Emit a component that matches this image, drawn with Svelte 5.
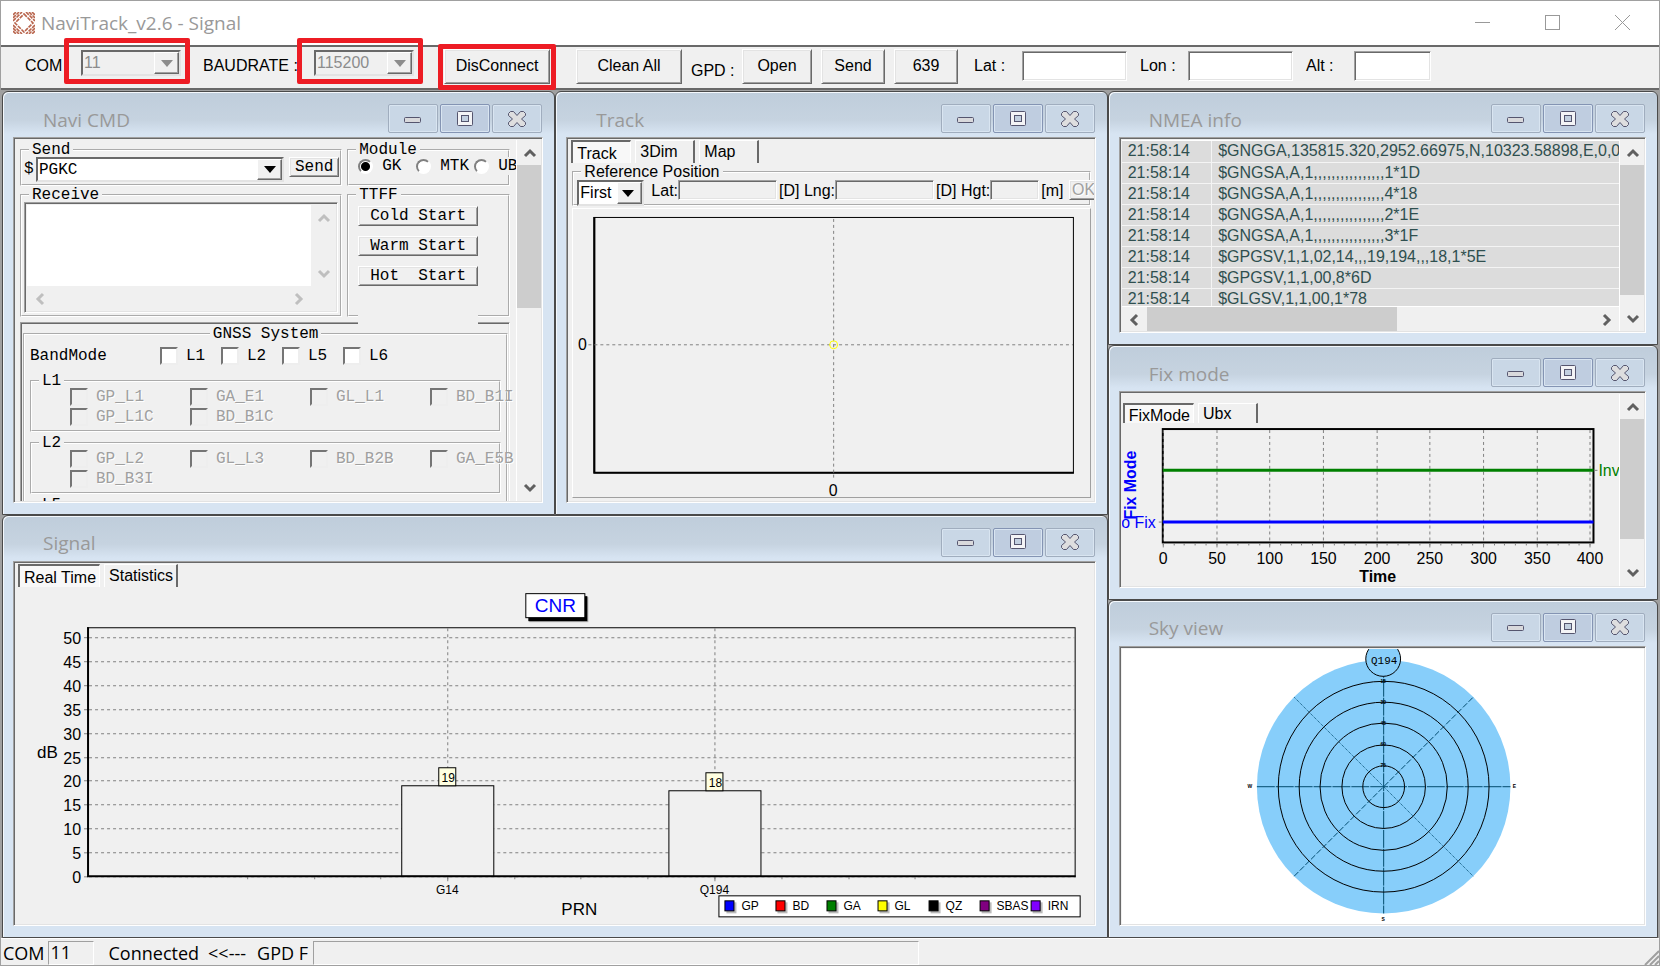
<script lang="ts">
	import type { Snippet } from 'svelte';

	let com = $state('11');
	let baud = $state('115200');
	let command = $state('PGKC');
	let module = $state('GK');
	let refMode = $state('First');
	let lat = $state('');
	let lon = $state('');
	let alt = $state('');
	let received = $state('');
	let trackTab = $state('Track');
	let fixTab = $state('FixMode');
	let signalTab = $state('Real Time');

	const bands = ['L1', 'L2', 'L5', 'L6'];
	const signalGroups = [
		{ name: 'L1', items: ['GP_L1', 'GA_E1', 'GL_L1', 'BD_B1I', 'GP_L1C', 'BD_B1C'] },
		{ name: 'L2', items: ['GP_L2', 'GL_L3', 'BD_B2B', 'GA_E5B', 'BD_B3I'] },
		{ name: 'L5', items: [] }
	];

	const nmea = [
		'$GNGGA,135815.320,2952.66975,N,10323.58898,E,0,0,',
		'$GNGSA,A,1,,,,,,,,,,,,,,,,1*1D',
		'$GNGSA,A,1,,,,,,,,,,,,,,,,4*18',
		'$GNGSA,A,1,,,,,,,,,,,,,,,,2*1E',
		'$GNGSA,A,1,,,,,,,,,,,,,,,,3*1F',
		'$GPGSV,1,1,02,14,,,19,194,,,18,1*5E',
		'$GPGSV,1,1,00,8*6D',
		'$GLGSV,1,1,00,1*78'
	].map((text) => ({ time: '21:58:14', text }));

	const dbTicks = [0, 5, 10, 15, 20, 25, 30, 35, 40, 45, 50];
	const dbY = (v: number) => Math.round(289 - v * 4.78) + 0.5;
	const bars = [
		{ prn: 'G14', x: 431, value: 19 },
		{ prn: 'Q194', x: 698, value: 18 }
	];
	const prnTicks = [231, 298, 364, 431, 498, 564, 631, 698, 765, 832, 898];

	const systems = [
		{ name: 'GP', color: '#0000ff' },
		{ name: 'BD', color: '#ff0000' },
		{ name: 'GA', color: '#008000' },
		{ name: 'GL', color: '#ffff00' },
		{ name: 'QZ', color: '#000000' },
		{ name: 'SBAS', color: '#800080' },
		{ name: 'IRN', color: '#8000ff' }
	];

	const timeTicks = [0, 50, 100, 150, 200, 250, 300, 350, 400];
	const timeX = (t: number) => Math.round(41 + t * 1.073) + 0.5;
	const minorTicks = Array.from({ length: 41 }, (_, i) => i * 10);

	const rings = [
		{ r: 106, label: '15' },
		{ r: 85, label: '30' },
		{ r: 64, label: '45' },
		{ r: 42, label: '60' },
		{ r: 21, label: '75' }
	];
</script>

<svelte:head><title>NaviTrack_v2.6 - Signal</title></svelte:head>

{#snippet win(title: string, area: string, body: Snippet)}
	<section class="win {area}">
		<header class="win-head">
			<h2>{title}</h2>
			<button class="win-btn" aria-label="Minimize {title}">
				<svg width="18" height="18"><rect x="0.5" y="7.5" width="16" height="5" rx="1" fill="#d9d9dc" stroke="#55556e" /></svg>
			</button>
			<button class="win-btn active" aria-label="Maximize {title}">
				<svg width="18" height="18">
					<rect x="1.5" y="1.5" width="15" height="14" rx="1" fill="#f4f4f6" stroke="#55556e" />
					<rect x="5.5" y="5.5" width="7" height="6" fill="#c3d0e0" stroke="#55556e" />
				</svg>
			</button>
			<button class="win-btn" aria-label="Close {title}">
				<svg width="18" height="18">
					<path d="M2.5 1.5h3L9 5.5l3.5-4h3l2 2v2L13.5 9l4 3.5v2l-2 2h-3L9 12.5l-3.5 4h-3l-2-2v-2L4.5 9l-4-3.5v-2z" fill="#dededf" stroke="#55556e" />
				</svg>
			</button>
		</header>
		<div class="client sunken">{@render body()}</div>
	</section>
{/snippet}

{#snippet chevron(dir: string)}
	<svg class="chevron {dir}" width="14" height="14"><path d="M2 10l5-5 5 5" fill="none" stroke="currentColor" stroke-width="3" /></svg>
{/snippet}

{#snippet scrollbar(dir: string, thumb: number)}
	<div class="scroll {dir}" class:idle={thumb === 0}>
		<button aria-label="Scroll back">{@render chevron(dir === 'v' ? 'up' : 'left')}</button>
		<div class="scroll-track">
			<div class="thumb" style="flex-basis: {thumb}%"></div>
		</div>
		<button aria-label="Scroll forward">{@render chevron(dir === 'v' ? 'down' : 'right')}</button>
	</div>
{/snippet}

{#snippet arrow()}
	<span class="arrow"><svg width="12" height="7"><path d="M0 0h12L6 7z" fill="currentColor" /></svg></span>
{/snippet}

{#snippet naviBody()}
	<div class="navi">
		<div class="navi-row">
			<fieldset class="wide send">
				<legend>Send</legend>
				<label for="cmd">$</label>
				<div class="combo grow">
					<select id="cmd" bind:value={command}>
						<option>PGKC</option>
						<option>PMTK</option>
					</select>
					{@render arrow()}
				</div>
				<button class="btn small">Send</button>
			</fieldset>
			<fieldset class="narrow">
				<legend>Module</legend>
				<div class="radios">
					{#each ['GK', 'MTK', 'UB'] as m}
						<label><input type="radio" name="module" value={m} bind:group={module} />{m}</label>
					{/each}
				</div>
			</fieldset>
		</div>
		<div class="navi-row">
			<fieldset class="wide receive">
				<legend>Receive</legend>
				<div class="receive-box sunken">
					<div class="receive-top">
						<textarea aria-label="Receive" bind:value={received}></textarea>
						{@render scrollbar('v', 0)}
					</div>
					{@render scrollbar('h', 0)}
				</div>
			</fieldset>
			<fieldset class="narrow ttff">
				<legend>TTFF</legend>
				<button class="btn small">Cold Start</button>
				<button class="btn small">Warm Start</button>
				<button class="btn small">Hot&nbsp; Start</button>
				<div class="blank"></div>
			</fieldset>
		</div>
		<div class="gnss sunken">
			<fieldset>
				<legend class="center">GNSS System</legend>
				<div class="bands">
					<span>BandMode</span>
					{#each bands as b}
						<label><input type="checkbox" />{b}</label>
					{/each}
				</div>
				{#each signalGroups as g}
					<fieldset class="signals">
						<legend>{g.name}</legend>
						<div class="signal-grid">
							{#each g.items as s}
								<label><input type="checkbox" disabled />{s}</label>
							{/each}
						</div>
					</fieldset>
				{/each}
			</fieldset>
		</div>
	</div>
	{@render scrollbar('v', 46)}
{/snippet}

{#snippet tabs(names: string[], current: string, pick: (n: string) => void)}
	<div class="tabs" role="tablist">
		{#each names as n}
			<button role="tab" class="tab" class:selected={n === current} aria-selected={n === current} onclick={() => pick(n)}>{n}</button>
		{/each}
	</div>
{/snippet}

{#snippet trackBody()}
	<div class="column track-column">
		{@render tabs(['Track', '3Dim', 'Map'], trackTab, (n) => (trackTab = n))}
		<fieldset class="refpos">
			<legend>Reference Position</legend>
			<div class="ref-row">
				<div class="combo ref-mode">
					<select aria-label="Reference mode" bind:value={refMode}>
						<option>First</option>
						<option>Mean</option>
					</select>
					{@render arrow()}
				</div>
				<label for="rlat">Lat:</label><input id="rlat" class="sunken" disabled />
				<label for="rlng">[D] Lng:</label><input id="rlng" class="sunken" disabled />
				<label for="rhgt">[D] Hgt:</label><input id="rhgt" class="sunken hgt" disabled />
				<span>[m]</span>
				<button class="btn ok" disabled>OK</button>
			</div>
		</fieldset>
		<div class="track-panel">
			<svg viewBox="0 0 516 289" role="img" aria-label="Track plot">
				<rect x="19.5" y="8.5" width="482" height="257" fill="none" stroke="#000" />
				<path d="M20 8v258M19 265h483" stroke="#000" stroke-width="2" />
				<path class="gridline" d="M260.5 10V265M14 136.5H501M260.5 267v4" />
				<circle cx="260.5" cy="136.5" r="4" fill="none" stroke="#ffff00" />
				<text x="8" y="142" text-anchor="middle">0</text>
				<text x="260" y="288" text-anchor="middle">0</text>
			</svg>
		</div>
	</div>
{/snippet}

{#snippet nmeaBody()}
	<div class="column">
		<div class="table-wrap">
			<table>
				<tbody>
					{#each nmea as row}
						<tr><td class="time">{row.time}</td><td>{row.text}</td></tr>
					{/each}
				</tbody>
			</table>
		</div>
		{@render scrollbar('h', 56)}
	</div>
	{@render scrollbar('v', 92)}
{/snippet}

{#snippet fixBody()}
	<div class="column fix-column">
		{@render tabs(['FixMode', 'Ubx'], fixTab, (n) => (fixTab = n))}
		<svg viewBox="0 0 500 163" role="img" aria-label="Fix mode over time">
			<rect x="41" y="6" width="433" height="114" fill="none" stroke="#000" stroke-width="2" />
			{#each timeTicks as t}
				<path class="gridline" d="M{timeX(t)} 7V119" />
				<path class="tick" d="M{timeX(t)} 121v4" />
				<text x={timeX(t)} y="142" text-anchor="middle">{t}</text>
			{/each}
			{#each minorTicks as t}
				<path class="tick" d="M{timeX(t)} 121v2" />
			{/each}
			<path d="M41 47.5H474" stroke="#008000" stroke-width="3" />
			<path d="M41 99.5H474" stroke="#0000ff" stroke-width="3" />
			<path class="tick" d="M475 47.5h3M37 99.5h3" />
			<text x="479" y="53" fill="#008000">Invalid</text>
			<text x="34" y="105" text-anchor="end" fill="#0000ff">No Fix</text>
			<text class="bold" transform="translate(14 97) rotate(-90)" fill="#0000ff">Fix Mode</text>
			<text class="bold" x="257" y="160" text-anchor="middle">Time</text>
		</svg>
	</div>
	{@render scrollbar('v', 85)}
{/snippet}

{#snippet signalBody()}
	<div class="column signal-column">
		{@render tabs(['Real Time', 'Statistics'], signalTab, (n) => (signalTab = n))}
		<svg viewBox="0 0 1077 337" role="img" aria-label="CNR per satellite">
			<rect x="513" y="10" width="59" height="25" fill="#777" opacity="0.5" />
			<rect x="512" y="9" width="59" height="25" fill="#000" />
			<rect x="509.5" y="6.5" width="59" height="24" fill="#fff" stroke="#000" />
			<text class="heading" x="539" y="25" text-anchor="middle" fill="#0000ff">CNR</text>

			<path d="M71 40.5H1058.5V290" fill="none" stroke="#000" />
			{#each dbTicks as v}
				<path class="gridline" d="M73 {dbY(v)}H1058" />
				<path class="tick" d="M68 {dbY(v)}h4" />
				<text x="65" y={dbY(v) + 6} text-anchor="end">{v}</text>
			{/each}
			{#each bars as b}
				<path class="gridline" d="M{b.x + 0.5} 41V289" />
				<rect x={b.x - 45.5} y={dbY(b.value)} width="92" height={289 - dbY(b.value)} fill="#f0f0f0" stroke="#000" />
				<rect x={b.x - 8.5} y={dbY(b.value) - 18} width="17" height="18" fill="#ffffe1" stroke="#000" />
				<text class="tiny" x={b.x + 1} y={dbY(b.value) - 4} text-anchor="middle">{b.value}</text>
				<path class="tick" d="M{b.x + 0.5} 290v4" />
				<text class="tiny" x={b.x} y="307" text-anchor="middle">{b.prn}</text>
			{/each}
			{#each prnTicks as x}
				<path class="tick" d="M{x + 0.5} 290v2" />
			{/each}
			<path d="M72 40V290M71 289H1059" stroke="#000" stroke-width="2" />
			<text class="axis" x="21" y="171">dB</text>
			<text class="axis" x="545" y="328">PRN</text>

			<rect x="702.5" y="308.5" width="361" height="21" fill="#fff" stroke="#000" />
			{#each systems as s, i}
				<rect x={710 + i * 51} y="315" width="10" height="11" fill="#bbb" />
				<rect x={708.5 + i * 51} y="313.5" width="9" height="10" fill={s.color} stroke="#000" />
				<text class="tiny" x={725 + i * 51} y="323">{s.name}</text>
			{/each}
		</svg>
	</div>
{/snippet}

{#snippet skyBody()}
	<div class="column sky">
		<svg viewBox="0 0 524 277" role="img" aria-label="Sky view">
			<circle cx="262.5" cy="138.5" r="127.5" fill="#87cefa" />
			<path class="spoke" d="M135 138.5H390M262.5 11V266" />
			<path class="spoke dashed" d="M172.5 228.5L352.5 48.5" />
			<path class="spoke thin" d="M172.5 48.5L352.5 228.5" />
			{#each rings as ring}
				<circle cx="262.5" cy="138.5" r={ring.r} fill="none" stroke="#000" />
				<text class="mark" x="262" y={140 - ring.r} text-anchor="middle">{ring.label}</text>
			{/each}
			<circle cx="262" cy="10" r="17.5" fill="#87cefa" stroke="#000" />
			<text class="sat" x="263" y="15" text-anchor="middle">Q194</text>
			<text class="mark" x="128" y="140" text-anchor="middle">W</text>
			<text class="mark" x="394" y="140" text-anchor="middle">E</text>
			<text class="mark" x="262" y="274" text-anchor="middle">S</text>
		</svg>
	</div>
{/snippet}

<div class="app">
	<header class="titlebar">
		<svg class="logo" width="22" height="22" viewBox="0 0 22 22">
			<g fill="none" stroke="#b8644c" stroke-width="1.6" stroke-dasharray="4 1">
				<path d="M11 2L20 11 11 20 2 11z" />
				<path d="M0 9L9 0M0 6L6 0M0 3L3 0M13 0l9 9M16 0l6 6M19 0l3 3M0 13l9 9M0 16l6 6M0 19l3 3M22 13l-9 9M22 16l-6 6M22 19l-3 3" />
			</g>
		</svg>
		<h1>NaviTrack_v2.6 - Signal</h1>
		<div class="caption">
			<button aria-label="Minimize"><svg width="16" height="16"><path d="M0 7.5h15" /></svg></button>
			<button aria-label="Maximize"><svg width="16" height="16"><rect x="0.5" y="0.5" width="14" height="14" /></svg></button>
			<button aria-label="Close"><svg width="16" height="16"><path d="M0 0l15 15M15 0L0 15" /></svg></button>
		</div>
	</header>

	<div class="toolbar">
		<label class="l-com" for="com">COM</label>
		<div class="marked">
			<div class="combo off">
				<select id="com" bind:value={com} disabled><option>11</option></select>
				{@render arrow()}
			</div>
		</div>
		<label class="l-baud" for="baud">BAUDRATE :</label>
		<div class="marked">
			<div class="combo off">
				<select id="baud" bind:value={baud} disabled><option>115200</option></select>
				{@render arrow()}
			</div>
		</div>
		<div class="marked tight">
			<button class="btn wide-btn">DisConnect</button>
		</div>
		<button class="btn wide-btn clean">Clean All</button>
		<span class="gpd">GPD :</span>
		<div class="gpd-buttons">
			<button class="btn">Open</button>
			<button class="btn">Send</button>
			<button class="btn">639</button>
		</div>
		<label class="l-pos" for="lat">Lat :</label><input id="lat" class="sunken" bind:value={lat} />
		<label class="l-pos" for="lon">Lon :</label><input id="lon" class="sunken" bind:value={lon} />
		<label class="l-pos" for="alt">Alt :</label><input id="alt" class="sunken alt" bind:value={alt} />
	</div>

	<main class="mdi">
		{@render win('Navi CMD', 'a-navi', naviBody)}
		{@render win('Track', 'a-track', trackBody)}
		{@render win('NMEA info', 'a-nmea', nmeaBody)}
		{@render win('Fix mode', 'a-fix', fixBody)}
		{@render win('Signal', 'a-signal', signalBody)}
		{@render win('Sky view', 'a-sky', skyBody)}
	</main>

	<footer class="status">
		<span>COM</span>
		<span class="cell port">11</span>
		<span class="state">Connected</span>
		<span class="dir">&lt;&lt;---</span>
		<span>GPD F</span>
		<span class="cell file"></span>
		<svg class="grip" width="16" height="16"><path d="M2 16L16 2M7 16l9-9M12 16l4-4" stroke="#a0a0a0" stroke-width="2" /></svg>
	</footer>
</div>

<style>
	:global(body) { margin: 0; }
	.app, .app * { box-sizing: border-box; }

	.app {
		display: flex;
		flex-direction: column;
		height: 100vh;
		border: 1px solid #a0a0a0;
		background: #f0f0f0;
		color: #000;
		font: 16px/20px "Liberation Sans", Arial, sans-serif;
		overflow: hidden;
	}
	button, input, select, textarea {
		font: inherit;
		color: inherit;
		margin: 0;
		padding: 0;
		border: 0;
		border-radius: 0;
		background: none;
		outline: none;
	}
	svg { display: block; flex: none; }
	h1, h2 { margin: 0; font: 400 19px/24px "Open Sans", sans-serif; color: #999; }

	/* title bar */
	.titlebar {
		display: flex;
		align-items: center;
		height: 44px;
		flex: none;
		padding-left: 12px;
		background: #fff;
	}
	h1 { margin-left: 6px; flex: 1; }
	.caption { display: flex; padding-right: 1px; }
	.caption button { width: 70px; height: 30px; display: grid; place-items: center; }
	.caption svg { fill: none; stroke: #999; }

	/* shared 3D edges */
	.sunken {
		border: 1px solid;
		border-color: #a0a0a0 #fff #fff #a0a0a0;
		box-shadow: inset 1px 1px #696969, inset -1px -1px #e3e3e3;
		padding: 2px 1px 1px 2px;
	}
	.btn {
		height: 35px;
		border: 1px solid;
		border-color: #fff #696969 #696969 #fff;
		box-shadow: inset 1px 1px #e3e3e3, inset -1px -1px #a0a0a0;
		background: #f0f0f0;
	}
	.btn.small { height: 20px; line-height: 16px; }
	.btn:disabled { color: #a0a0a0; text-shadow: 1px 1px #fff; }
	.combo {
		position: relative;
		height: 26px;
		border: 2px solid;
		border-color: #696969 #e3e3e3 #e3e3e3 #696969;
		background: #fff;
	}
	.combo select { appearance: none; width: 100%; height: 100%; padding-left: 1px; line-height: 20px; opacity: 1; }
	.arrow {
		position: absolute;
		top: 0;
		right: 0;
		bottom: 0;
		width: 25px;
		display: grid;
		place-items: center;
		border: 1px solid;
		border-color: #fff #696969 #696969 #fff;
		box-shadow: inset -1px -1px #a0a0a0;
		background: #f0f0f0;
		pointer-events: none;
	}
	.combo.off { background: #f0f0f0; color: #8c8c8c; width: 100px; }

	/* toolbar */
	.toolbar {
		display: flex;
		align-items: center;
		height: 45px;
		flex: none;
		padding: 0 0 3px 24px;
		border-top: 2px solid #696969;
		border-bottom: 2px solid #696969;
	}
	.toolbar label { white-space: nowrap; }
	.toolbar input { width: 105px; height: 30px; background: #fff; }
	.toolbar input.alt { width: 77px; }
	.l-com { width: 56px; }
	.l-baud { width: 111px; margin-left: 22px; }
	.l-pos { width: 48px; margin-left: 13px; }
	.marked { position: relative; margin-bottom: 6px; }
	.marked::after {
		content: '';
		position: absolute;
		z-index: 2;
		inset: -12px -9px -8px -17px;
		border: 5px solid #ed1c24;
		border-radius: 2px;
		pointer-events: none;
	}
	.marked.tight { margin: 0 0 0 30px; }
	.marked.tight::after { inset: -5px -6px -6px -6px; }
	.wide-btn { width: 106px; }
	.clean { margin-left: 26px; }
	.gpd { width: 51px; margin: 10px 0 0 9px; white-space: nowrap; }
	.gpd-buttons { display: flex; gap: 9px; margin-right: 3px; }
	.gpd-buttons .btn { width: 64px; }
	.gpd-buttons .btn:first-child { width: 70px; }

	/* windows */
	.mdi {
		flex: 1;
		min-height: 0;
		display: grid;
		grid-template-columns: minmax(0, 553fr) minmax(0, 552fr) minmax(0, 550fr);
		grid-template-rows: minmax(0, 254fr) minmax(0, 169fr) minmax(0, 85fr) minmax(0, 338fr);
		grid-template-areas: 'navi track nmea' 'navi track fix' 'signal signal fix' 'signal signal sky';
		padding: 1px 1px 0 2px;
		margin-left: -1px;
		background: #a0a0a0;
	}
	.a-navi { grid-area: navi; }
	.a-track { grid-area: track; }
	.a-nmea { grid-area: nmea; }
	.a-fix { grid-area: fix; }
	.a-signal { grid-area: signal; }
	.a-sky { grid-area: sky; }
	.win {
		display: flex;
		flex-direction: column;
		min-width: 0;
		min-height: 0;
		padding: 0 11px 11px 10px;
		border: 1px solid #4a4a4a;
		border-radius: 6px 6px 0 0;
		box-shadow: inset 1px 1px #f4f8fc;
		background: linear-gradient(#bfcddb, #c6d3e0 28px, #d7e4f2 42px, #d7e4f2);
	}
	.win-head {
		display: flex;
		align-items: center;
		gap: 2px;
		height: 45px;
		flex: none;
		padding: 8px 1px 0 30px;
	}
	h2 { flex: 1; padding-top: 2px; }
	.win-btn {
		display: grid;
		place-items: center;
		width: 50px;
		height: 29px;
		border: 1px solid #a0adbe;
		border-radius: 2px;
		box-shadow: inset 0 0 0 1px #d9e5f1;
		background: #c9d7e6;
	}
	.win-btn.active { border-color: #8494b3; background: #bfcde0; }
	.client {
		display: flex;
		flex: 1;
		min-height: 0;
		background: #f0f0f0;
		overflow: hidden;
	}
	.column { display: flex; flex-direction: column; flex: 1; min-width: 0; overflow: hidden; }
	.column > svg { flex: 1; min-height: 0; width: 100%; }

	/* scrollbars */
	.scroll { display: flex; flex: none; background: #f0f0f0; color: #606060; }
	.scroll.v { flex-direction: column; width: 25px; border-left: 1px solid #fff; }
	.scroll.h { height: 25px; border-top: 1px solid #fff; }
	.scroll button { width: 25px; height: 25px; display: grid; place-items: center; }
	.scroll-track { flex: 1; display: flex; min-height: 0; }
	.scroll.v .scroll-track { flex-direction: column; }
	.thumb { background: #cdcdcd; }
	.scroll.idle { color: #bfbfbf; }
	.chevron.down { transform: rotate(180deg); }
	.chevron.left { transform: rotate(-90deg); }
	.chevron.right { transform: rotate(90deg); }

	/* tabs */
	.tabs { display: flex; gap: 4px; flex: none; padding-left: 2px; }
	.tab {
		height: 23px;
		min-width: 60px;
		padding: 0 3px 0 4px;
		text-align: left;
		border: solid #696969;
		border-width: 1px 2px 0 1px;
		border-top-color: #fff;
		border-left-color: #fff;
	}
	.tab.selected {
		padding-top: 2px;
		border: solid #696969;
		border-width: 2px 1px 0 2px;
		border-right-color: #fff;
		background: #f8f8f8;
	}

	/* group boxes */
	fieldset { margin: 0; min-width: 0; padding: 0; border: 2px groove #fff; }
	legend { margin-left: 7px; padding: 0 3px; line-height: 14px; }
	legend.center { margin: 0 auto; }

	/* Navi CMD */
	.navi {
		flex: 1;
		min-width: 0;
		padding: 3px 6px 0 4px;
		font-family: "Liberation Mono", "Courier New", monospace;
		font-size: 16px;
		overflow: hidden;
	}
	.navi-row { display: flex; gap: 5px; margin-bottom: 2px; }
	.wide { flex: 2; }
	.narrow { flex: 1; }
	.navi-row fieldset { height: 43px; }
	.navi-row .receive, .navi-row .ttff { height: 129px; }
	.send label { float: left; width: 14px; padding-left: 2px; line-height: 24px; }
	.send .combo { float: left; width: calc(100% - 70px); height: 25px; }
	.send .btn { float: right; width: 50px; margin-right: 1px; }
	.radios { display: flex; width: max-content; padding-left: 9px; line-height: 18px; }
	.radios label { display: flex; align-items: center; gap: 9px; width: 58px; background: #f0f0f0; }
	input[type='radio'] {
		appearance: none;
		flex: none;
		width: 15px;
		height: 15px;
		border: 2px solid;
		border-color: #808080 #fff #fff #808080;
		border-radius: 50%;
		background: #fff;
	}
	input[type='radio']:checked { background: radial-gradient(#000 4px, #fff 5px); }
	.receive-box { display: flex; flex-direction: column; height: 111px; margin: 0 2px; background: #f0f0f0; }
	.receive-top { display: flex; flex: 1; min-height: 0; }
	textarea { flex: 1; min-width: 0; resize: none; background: #fff; }
	.receive-top .scroll { border: 0; }
	.receive .scroll.h { padding-right: 25px; border: 0; }
	.ttff .btn { display: block; width: 120px; margin: 0 0 10px 9px; }
	.ttff .btn:nth-of-type(1) { margin-top: 4px; }
	.blank { position: relative; width: 120px; height: 30px; margin-left: 9px; background: #f0f0f0; }
	.gnss { margin-top: 5px; }
	.gnss > fieldset { height: 260px; margin-top: 2px; padding: 0 5px; }
	.bands { display: flex; align-items: center; height: 18px; margin: 6px 0 9px; }
	.bands span { width: 130px; }
	.bands label { width: 61px; }
	.bands label, .signal-grid label { display: flex; align-items: center; gap: 8px; height: 18px; }
	input[type='checkbox'] {
		appearance: none;
		flex: none;
		width: 18px;
		height: 18px;
		border: 2px solid;
		border-color: #757575 #eee #eee #757575;
		background: #fff;
	}
	input[type='checkbox']:disabled { background: #f0f0f0; }
	.signals { height: 58px; margin-bottom: 4px; }
	.signal-grid {
		display: grid;
		grid-template-columns: repeat(4, 120px);
		row-gap: 2px;
		padding-left: 38px;
		color: #a0a0a0;
		text-shadow: 1px 1px #fff;
	}

	/* Track */
	.refpos { margin: 1px 3px 0 3px; height: 42px; }
	.refpos legend { line-height: 16px; }
	.track-column .tabs, .track-column .refpos { white-space: nowrap; }
	.ref-row { display: flex; align-items: flex-start; width: max-content; padding-left: 3px; }
	.ref-row label { padding-left: 2px; line-height: 22px; }
	.ref-row span { padding: 0 5px 0 2px; line-height: 22px; }
	.ref-row input { width: 99px; height: 20px; }
	.ref-row .hgt { width: 49px; }
	.ref-mode { width: 67px; margin-right: 5px; }
	.btn.ok { width: 30px; height: 20px; line-height: 16px; }
	.track-panel {
		flex: 1;
		min-height: 0;
		display: flex;
		margin: 2px 3px 3px;
		border: 1px solid;
		border-color: #fff #a0a0a0 #a0a0a0 #fff;
	}
	.track-panel svg { width: 100%; flex: 1; }

	/* NMEA */
	.table-wrap { flex: 1; min-height: 0; overflow: hidden; border-top: 1px solid #fff; }
	table { border-collapse: collapse; width: 100%; background: #dcdcdc; color: #2f4f4f; white-space: nowrap; }
	td { height: 21px; padding: 0 6px; border-bottom: 1px solid #f4f4f4; line-height: 20px; }
	td.time { min-width: 90px; border-right: 1px solid #f4f4f4; }

	.fix-column .tabs { padding: 9px 0 0 1px; }
	.fix-column .tab { height: 20px; line-height: 18px; }
	.sky { background: #fff; }

	/* charts */
	svg text { font-size: 16px; }
	.gridline { stroke: #808080; stroke-dasharray: 3 3; fill: none; }
	.tick { stroke: #808080; fill: none; }
	.bold { font-weight: 700; }
	svg .heading { font-size: 19px; }
	svg .axis { font-size: 17px; }
	svg .tiny { font-size: 12px; }
	svg .mark { font-size: 5px; font-weight: 700; }
	svg .sat { font: 11px "Liberation Mono", monospace; }
	.spoke { stroke: #004b6e; stroke-dasharray: 18 1; }
	.spoke.dashed { stroke-dasharray: 6 2; }
	.spoke.thin { stroke-dasharray: 1 1; }

	/* status bar */
	.status {
		position: relative;
		display: flex;
		align-items: center;
		height: 27px;
		flex: none;
		padding: 2px 0 0 2px;
		border-top: 1px solid #fff;
		font: 18px/22px "Open Sans", sans-serif;
		white-space: nowrap;
	}
	.cell { align-self: stretch; border: 1px solid; border-color: #a0a0a0 #fff #fff #a0a0a0; }
	.port { width: 46px; margin-left: 3px; padding-left: 2px; line-height: 20px; }
	.state { margin-left: 15px; }
	.dir { width: 49px; margin-left: 9px; overflow: hidden; }
	.file { flex: 0 1 606px; margin-left: 5px; }
	.grip { position: absolute; right: 0; bottom: 0; }
</style>
